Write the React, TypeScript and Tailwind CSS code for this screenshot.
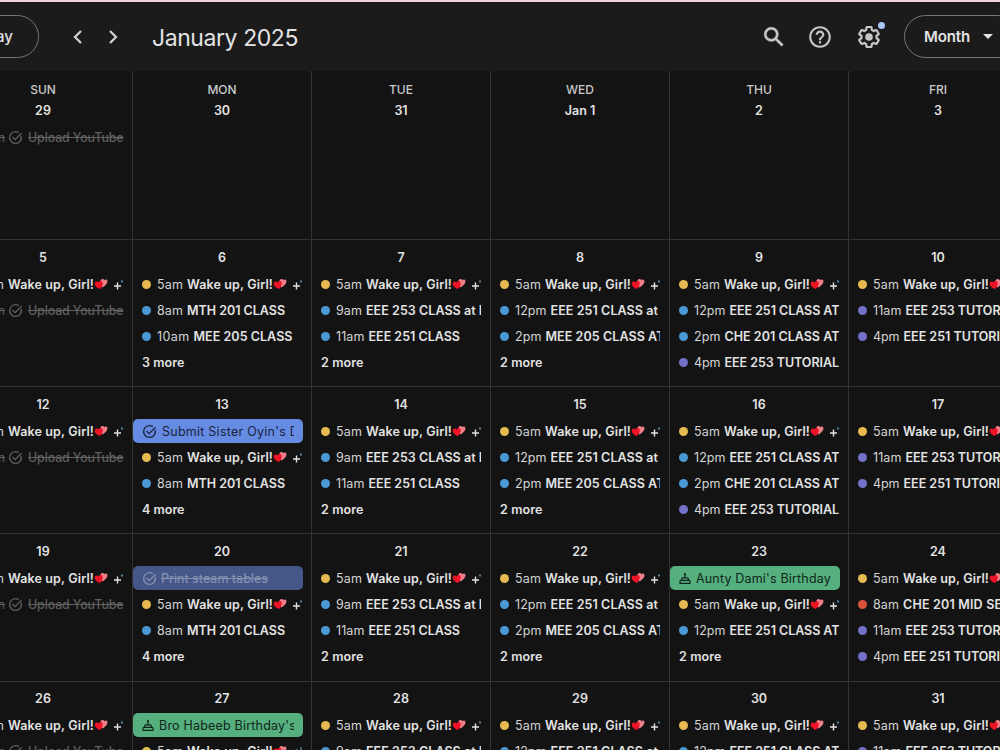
import { useLayoutEffect, useRef, useState } from "react";

const FONT = "font-['Inter','Liberation_Sans',sans-serif]";

/* Text whose tracking is adjusted so that it spans the given width. */
function Fit({ text, w, className = "" }: { text: string; w?: number; className?: string }) {
  const ref = useRef<HTMLSpanElement>(null);
  const [sp, setSp] = useState(0);
  useLayoutEffect(() => {
    if (!ref.current || !w) return;
    const natural = ref.current.getBoundingClientRect().width - sp * text.length;
    const next = (w - natural) / text.length;
    if (Math.abs(next - sp) > 0.01) setSp(next);
  }, [text, w, sp]);
  return (
    <span ref={ref} className={`inline-block shrink-0 whitespace-pre ${className}`} style={{ letterSpacing: `${sp}px` }}>
      {text}
    </span>
  );
}

const dots = {
  yellow: "bg-[#e6ba50]",
  blue: "bg-[#4a99d5]",
  purple: "bg-[#7472c8]",
  red: "bg-[#d9523a]",
};

const timeWidths: Record<string, number> = {
  "5am": 26, "8am": 26, "9am": 26, "10am": 32.5, "11am": 28.5, "12pm": 31.5, "2pm": 26.5, "4pm": 26.5,
};

const titleWidths: Record<string, number> = {
  "Wake up, Girl!": 86,
  "MTH 201 CLASS": 98,
  "MEE 205 CLASS": 99,
  "MEE 205 CLASS AT": 119,
  "EEE 253 CLASS at L": 120,
  "EEE 251 CLASS": 91.5,
  "EEE 251 CLASS at": 107.5,
  "EEE 251 CLASS AT": 110,
  "CHE 201 CLASS AT": 115,
  "EEE 253 TUTORIAL": 114.5,
  "EEE 251 TUTORIAL": 112.5,
  "CHE 201 MID SEM": 111,
};

type Item =
  | { kind: "event"; dot: keyof typeof dots; time: string; title: string }
  | { kind: "task" }
  | { kind: "chip"; tone: "task" | "done" | "birthday"; title: string; w: number }
  | { kind: "more"; n: number };

const ev = (dot: keyof typeof dots, time: string, title: string): Item => ({ kind: "event", dot, time, title });
const more = (n: number): Item => ({ kind: "more", n });
const wake = ev("yellow", "5am", "Wake up, Girl!");
const upload: Item = { kind: "task" };
const mth = ev("blue", "8am", "MTH 201 CLASS");
const mee10 = ev("blue", "10am", "MEE 205 CLASS");
const tue = [wake, ev("blue", "9am", "EEE 253 CLASS at L"), ev("blue", "11am", "EEE 251 CLASS"), more(2)];
const wed = [wake, ev("blue", "12pm", "EEE 251 CLASS at"), ev("blue", "2pm", "MEE 205 CLASS AT"), more(2)];
const eee12 = ev("blue", "12pm", "EEE 251 CLASS AT");
const thu = [wake, eee12, ev("blue", "2pm", "CHE 201 CLASS AT"), ev("purple", "4pm", "EEE 253 TUTORIAL")];
const fri11 = ev("purple", "11am", "EEE 253 TUTORIAL");
const fri4 = ev("purple", "4pm", "EEE 251 TUTORIAL");

const weeks: { h: string; top: string; days: { d: string; items: Item[] }[] }[] = [
  {
    h: "h-[147px]", top: "h-8 pt-1",
    days: [
      { d: "5", items: [wake, upload] },
      { d: "6", items: [wake, mth, mee10, more(3)] },
      { d: "7", items: tue },
      { d: "8", items: wed },
      { d: "9", items: thu },
      { d: "10", items: [wake, fri11, fri4] },
    ],
  },
  {
    h: "h-[147px]", top: "h-8 pt-[5px]",
    days: [
      { d: "12", items: [wake, upload] },
      { d: "13", items: [{ kind: "chip", tone: "task", title: "Submit Sister Oyin's D", w: 137 }, wake, mth, more(4)] },
      { d: "14", items: tue },
      { d: "15", items: wed },
      { d: "16", items: thu },
      { d: "17", items: [wake, fri11, fri4] },
    ],
  },
  {
    h: "h-[148px]", top: "h-8 pt-[5px]",
    days: [
      { d: "19", items: [wake, upload] },
      { d: "20", items: [{ kind: "chip", tone: "done", title: "Print steam tables", w: 107 }, wake, mth, more(4)] },
      { d: "21", items: tue },
      { d: "22", items: wed },
      { d: "23", items: [{ kind: "chip", tone: "birthday", title: "Aunty Dami's Birthday", w: 135 }, wake, eee12, more(2)] },
      { d: "24", items: [wake, ev("red", "8am", "CHE 201 MID SEM"), fri11, fri4] },
    ],
  },
  {
    h: "h-[147px]", top: "h-[31px] pt-1",
    days: [
      { d: "26", items: [wake, upload] },
      { d: "27", items: [{ kind: "chip", tone: "birthday", title: "Bro Habeeb Birthday's", w: 137 }, wake, mth, more(4)] },
      { d: "28", items: tue },
      { d: "29", items: wed },
      { d: "30", items: thu },
      { d: "31", items: [wake, fri11, fri4] },
    ],
  },
];

function TaskIcon({ className = "" }: { className?: string }) {
  return (
    <svg viewBox="0 0 24 24" className={`size-[15px] shrink-0 ${className}`} fill="none" stroke="currentColor" strokeWidth="2.1">
      <path d="M17.2 4.2A9.4 9.4 0 1 0 21 9.3" />
      <path d="m7.2 11.2 4.2 4.2L21.6 5.2" />
    </svg>
  );
}

function CakeIcon() {
  return (
    <svg viewBox="0 0 12 13" className="h-[13px] w-3 shrink-0" fill="none" stroke="currentColor" strokeWidth="1.2">
      <path d="M6 2.8v3" />
      <path d="M6 .6q1.3 1.3 1.1 2Q6.8 3.4 6 3.4T4.9 2.6Q4.7 1.9 6 .6z" fill="currentColor" stroke="none" />
      <path d="M2.7 8.3V6.8q0-1 1-1h4.6q1 0 1 1v1.5M1 11.4V9.3q0-1 1-1h8q1 0 1 1v2.1z" />
    </svg>
  );
}

function Hearts() {
  return (
    <svg viewBox="0 0 14 12" className="mb-px h-3 w-[14px] shrink-0">
      <path d="M8.4 9.4C7 7.6 6.2 5.700 6.300 3.900c0-1.700.9-2.800 2.200-2.800.9 0 1.500.5 1.700 1.100.6-.7 1.300-.9 2.100-.6 1.200.5 1.400 1.800.9 3.100C12.600 6.400 10.600 8.200 8.400 9.400z" fill="#ef7f89" />
      <path d="M6 11C3.300 10.100 1 8.500.7 6.300c-.2-1.500.7-2.600 2-2.700.9 0 1.500.4 1.900 1 .3-1 1.100-1.600 2.100-1.500 1.500.1 2.200 1.400 2 2.800C8.500 7.700 7.300 9.500 6 11z" fill="#ee1327" />
    </svg>
  );
}

function Sparkle() {
  return (
    <svg viewBox="0 0 12 14" className="h-[14px] w-3 shrink-0" fill="none">
      <path d="M4.500 4.500v7M1 8h7" stroke="#e3e3e3" strokeWidth="1.400" />
      <path d="M9 2.500v2" stroke="#79bfe8" strokeWidth="1.300" />
    </svg>
  );
}

const chipTones = {
  task: "bg-[#668be3] text-[#1b2440]",
  done: "bg-[#445788] text-[#8390b0]",
  birthday: "bg-[#55af7e] text-[#10251a]",
};

function Row({ item }: { item: Item }) {
  if (item.kind === "chip") {
    return (
      <div className={`flex h-6 w-[170px] items-center rounded-[5px] pr-[9px] ${chipTones[item.tone]}`}>
        <div className="flex h-6 min-w-0 flex-1 items-center overflow-hidden pt-px pl-[9px]">
          {item.tone === "birthday" ? <CakeIcon /> : <TaskIcon />}
          <Fit
            text={item.title}
            w={item.w}
            className={item.tone === "birthday" ? "mt-px ml-[5px]" : item.tone === "done" ? "mt-px ml-1 font-medium line-through" : "mt-px ml-[5px]"}
          />
        </div>
      </div>
    );
  }
  if (item.kind === "task") {
    return (
      <div className="flex h-6 w-[170px] items-center overflow-hidden pt-px pl-[10px] text-[#5f5f5f]">
        <span className="mt-px w-[41px] shrink-0 text-right line-through">10pm</span>
        <TaskIcon className="ml-[3px]" />
        <Fit text="Upload YouTube" w={95.5} className="mt-px ml-[5px] font-medium line-through" />
      </div>
    );
  }
  if (item.kind === "more") {
    return (
      <div className="flex h-6 items-center pt-[2px] pl-[9px] font-[560]">
        <Fit text={`${item.n} more`} w={42.5} />
      </div>
    );
  }
  return (
    <div className="flex h-6 w-[169px] items-center overflow-hidden pt-px pl-[9px]">
      <i className={`mr-[6px] size-[9px] shrink-0 rounded-full ${dots[item.dot]}`} />
      <Fit text={item.time} w={timeWidths[item.time]} className="mt-px text-[#d5d5d5]" />
      <Fit text={item.title} w={titleWidths[item.title]} className="mt-px ml-1 font-[560]" />
      {item.title === "Wake up, Girl!" && (
        <>
          <Hearts />
          <span className="w-[5px] shrink-0" />
          <Sparkle />
        </>
      )}
    </div>
  );
}

const heads = [["SUN", "29"], ["MON", "30"], ["TUE", "31"], ["WED", "Jan 1"], ["THU", "2"], ["FRI", "3"]];

export default function App() {
  return (
    <div className={`h-[750px] w-[1000px] overflow-hidden bg-[#131313] text-[12.5px] leading-none text-[#e3e3e3] ${FONT}`}>
      <header className="flex h-[71px] items-center border-t-2 border-[#f3d3da] bg-[#1b1b1b]">
        <div className="-ml-[60px] flex h-[43px] w-[99px] shrink-0 items-center justify-end rounded-full border border-[#747775] pr-[25px] text-[15px] font-medium">
          Today
        </div>
        <svg viewBox="0 0 24 24" className="ml-[27px] size-6 shrink-0" fill="none" stroke="#d0d0d0" strokeWidth="2.3">
          <path d="m15 6-6 6 6 6" />
        </svg>
        <svg viewBox="0 0 24 24" className="ml-[11px] size-6 shrink-0" fill="none" stroke="#d0d0d0" strokeWidth="2.3">
          <path d="m9 6 6 6-6 6" />
        </svg>
        <Fit text="January 2025" w={146} className="ml-[27px] pt-[3px] text-[23px]" />
        <div className="ml-auto flex shrink-0 items-center text-[#c7c7c7]">
          <svg viewBox="0 0 24 24" className="size-[26px]" fill="currentColor" stroke="currentColor" strokeWidth="0.5">
            <path d="M20.49 19l-5.73-5.73C15.53 12.2 16 10.91 16 9.5 16 5.91 13.09 3 9.5 3S3 5.91 3 9.5 5.91 16 9.5 16c1.41 0 2.7-.47 3.77-1.24L19 20.49 20.49 19zM5 9.5C5 7.01 7.01 5 9.5 5S14 7.01 14 9.5 11.99 14 9.5 14 5 11.99 5 9.5z" />
          </svg>
          <svg viewBox="0 0 24 24" className="ml-[20px] size-[26px]" fill="currentColor">
            <path d="M11 18h2v-2h-2v2zm1-16C6.48 2 2 6.48 2 12s4.48 10 10 10 10-4.48 10-10S17.52 2 12 2zm0 18c-4.41 0-8-3.59-8-8s3.59-8 8-8 8 3.59 8 8-3.59 8-8 8zm0-14c-2.21 0-4 1.79-4 4h2c0-1.1.9-2 2-2s2 .9 2 2c0 2-3 1.75-3 5h2c0-2.25 3-2.5 3-5 0-2.21-1.79-4-4-4z" />
          </svg>
          <div className="relative ml-[23px] size-[26px]">
            <svg viewBox="0 0 24 24" className="size-[26px]" fill="currentColor">
              <path d="M13.85 22.25h-3.7c-.74 0-1.36-.54-1.45-1.27l-.27-1.89c-.27-.14-.53-.29-.79-.46l-1.8.72c-.7.26-1.47-.03-1.81-.65L2.2 15.53c-.35-.66-.2-1.44.36-1.88l1.53-1.19c-.01-.15-.02-.3-.02-.46 0-.15.01-.31.02-.46l-1.52-1.19c-.59-.45-.74-1.26-.37-1.88l1.85-3.19c.34-.62 1.11-.9 1.79-.63l1.81.73c.26-.17.52-.32.78-.46l.27-1.91c.09-.7.71-1.25 1.44-1.25h3.7c.74 0 1.36.54 1.45 1.27l.27 1.89c.27.14.53.29.79.46l1.8-.72c.71-.26 1.48.03 1.82.65l1.84 3.18c.36.66.2 1.44-.36 1.88l-1.52 1.19c.01.15.02.3.02.46s-.01.31-.02.46l1.52 1.19c.56.45.72 1.23.37 1.86l-1.86 3.22c-.34.62-1.11.9-1.8.63l-1.8-.72c-.26.17-.52.32-.78.46l-.27 1.91c-.1.68-.72 1.22-1.46 1.22zm-3.23-2h2.76l.37-2.55.53-.22c.44-.18.88-.44 1.34-.78l.45-.34 2.38.96 1.38-2.4-2.03-1.58.07-.56c.03-.26.06-.51.06-.78s-.03-.53-.06-.78l-.07-.56 2.03-1.58-1.39-2.4-2.39.96-.45-.35c-.42-.32-.87-.58-1.33-.77l-.52-.22-.37-2.55h-2.76l-.37 2.55-.53.21c-.44.19-.88.44-1.34.79l-.45.33-2.38-.95-1.39 2.39 2.03 1.58-.07.56a7 7 0 0 0-.06.79c0 .26.02.53.06.78l.07.56-2.03 1.58 1.38 2.4 2.39-.96.45.35c.43.33.86.58 1.33.77l.53.22.38 2.55z" />
              <circle cx="12" cy="12" r="3.5" />
            </svg>
            <span className="absolute -top-[2px] left-[21.5px] size-[7px] rounded-full bg-[#a8c7fa]" />
          </div>
          <div className="ml-[22px] -mr-[20px] flex h-[43px] w-[116px] items-center rounded-full border border-[#747775] pl-[19px] text-[15px] font-[560] text-[#e3e3e3]">
            <Fit text="Month" w={46} />
            <span className="ml-[13px] border-x-[5px] border-t-[5px] border-x-transparent border-t-[#e3e3e3]" />
          </div>
        </div>
      </header>

      <div className="-ml-[46px] flex h-[169px] w-[1074px]">
        {heads.map(([day, date], i) => (
          <div key={day} className="h-full w-[179px] shrink-0 border-r border-b border-[#333333] pt-[6px]">
            <div className="flex h-[26px] items-center justify-center text-[12px] font-medium text-[#c9c9c9]">{day}</div>
            <div className="flex h-[15px] items-center justify-center pt-[2px] font-[560]">{date}</div>
            {i === 0 && (
              <div className="mt-[7px]">
                <Row item={upload} />
              </div>
            )}
          </div>
        ))}
      </div>

      {weeks.map((week) => (
        <div key={week.days[0].d} className={`-ml-[46px] flex w-[1074px] ${week.h}`}>
          {week.days.map((day) => (
            <div key={day.d} className="h-full w-[179px] shrink-0 border-r border-b border-[#333333]">
              <div className={`flex items-center justify-center font-[560] ${week.top}`}>{day.d}</div>
              <div className="flex flex-col gap-[2px]">
                {day.items.map((item, i) => (
                  <Row key={i} item={item} />
                ))}
              </div>
            </div>
          ))}
        </div>
      ))}
    </div>
  );
}
